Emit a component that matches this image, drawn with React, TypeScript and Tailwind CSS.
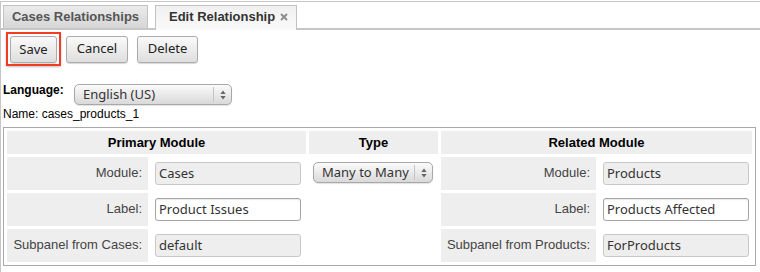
import React from 'react';

const Arrows: React.FC = () => (
  <svg width="6" height="10" viewBox="0 0 6 10">
    <path d="M3 0.5 L5.6 4 L0.4 4 Z" fill="#666" />
    <path d="M3 9.5 L5.6 6 L0.4 6 Z" fill="#666" />
  </svg>
);

interface SelectProps {
  value: string;
  width: string;
}

const Select: React.FC<SelectProps> = ({ value, width }) => (
  <div
    className={`${width} h-[21px] flex items-center rounded-[5px] border border-[#a8a8a8] bg-linear-to-b from-[#fbfbfb] to-[#d9d9d9] shadow-[0_1px_1px_rgba(0,0,0,0.12)] font-['Noto_Sans',sans-serif] text-[13px] text-[#333]`}
  >
    <span className="flex-1 pl-[8px] leading-none">{value}</span>
    <span className="h-[15px] border-l border-[#c4c4c4] w-[18px] flex items-center justify-center">
      <Arrows />
    </span>
  </div>
);

interface FieldProps {
  value: string;
  disabled?: boolean;
}

const Field: React.FC<FieldProps> = ({ value, disabled }) => (
  <div
    className={`w-[146px] h-[23px] flex items-center pl-[3px] rounded-[3px] border font-['Noto_Sans',sans-serif] text-[13px] text-[#333] ${
      disabled ? 'bg-[#eeeeee] border-[#c8c8c8]' : 'bg-white border-[#a4a4a4] shadow-[inset_0_1px_1px_rgba(0,0,0,0.08)]'
    }`}
  >
    {value}
  </div>
);

const Button: React.FC<{ label: string; width: string }> = ({ label, width }) => (
  <button
    className={`${width} h-[27px] rounded-[3px] border border-[#ababab] bg-linear-to-b from-[#fafafa] to-[#dedede] shadow-[0_1px_1px_rgba(0,0,0,0.15)] font-['Noto_Sans',sans-serif] text-[13px] text-[#222]`}
  >
    {label}
  </button>
);

const labelCell = "bg-[#eeeeee] h-[33px] align-top text-right pt-[8px] pr-[6px] text-[13px] text-[#444] leading-[15px]";
const fieldCell = "h-[33px] align-top pt-[5px] pl-[4px]";

export default function App() {
  return (
    <div className="w-[760px] h-[272px] bg-white pt-px font-['Liberation_Sans',Arial,sans-serif]">
      <div className="h-[271px] border-t border-l border-[#c6c6c6]">
        {/* tabs */}
        <div className="flex items-end gap-[7px] pl-[2px] pt-[3px] border-b-2 border-[#c6c6c6]">
          <div className="h-[23px] w-[145px] flex items-center justify-center border border-b-0 border-[#c2c2c2] bg-linear-to-b from-[#ebebeb] to-[#d6d6d6] text-[13px] font-bold text-[#555]">
            Cases Relationships
          </div>
          <div className="-mb-[2px] h-[25px] pb-[2px] w-[142px] flex items-center pl-[13px] border border-b-0 border-[#c2c2c2] bg-linear-to-b from-[#f0f0f0] to-[#fafafa] text-[13px] font-bold text-[#333]">
            Edit Relationship
            <svg className="ml-[5px]" width="8" height="8" viewBox="0 0 8 8">
              <path d="M1 1 L7 7 M7 1 L1 7" stroke="#8a8a8a" strokeWidth="1.8" />
            </svg>
          </div>
        </div>

        {/* buttons */}
        <div className="flex items-center pl-[5px] mt-[2px]">
          <div className="border-2 border-[#f23c24] p-[2px] pb-px shadow-[0_1px_2px_rgba(0,0,0,0.25)] mr-[5px]">
            <Button label="Save" width="w-[47px]" />
          </div>
          <div className="mr-[9px]">
            <Button label="Cancel" width="w-[62px]" />
          </div>
          <Button label="Delete" width="w-[61px]" />
        </div>

        <div className="pl-[2px]">
          {/* language */}
          <div className="flex items-start mt-[16px]">
            <span className="w-[71px] text-[12px] font-bold text-black leading-[14px] pt-px">Language:</span>
            <div className="mt-[2px]">
              <Select value="English (US)" width="w-[158px]" />
            </div>
          </div>
          <div className="text-[12px] text-black leading-[14px] mt-[2px]">Name: cases_products_1</div>

          {/* relationship table */}
          <table className="mt-[6px] w-[753px] table-fixed border-separate border-spacing-[3px] border border-[#a8a8a8]">
            <colgroup>
              <col className="w-[141px]" />
              <col className="w-[155px]" />
              <col className="w-[129px]" />
              <col className="w-[155px]" />
              <col className="w-[153px]" />
            </colgroup>
            <tbody>
              <tr>
                <th colSpan={2} className="bg-[#eeeeee] h-[23px] text-[13px] font-bold text-black">Primary Module</th>
                <th className="bg-[#eeeeee] h-[23px] text-[13px] font-bold text-black">Type</th>
                <th colSpan={2} className="bg-[#eeeeee] h-[23px] text-[13px] font-bold text-black">Related Module</th>
              </tr>
              <tr>
                <td className={labelCell}>Module:</td>
                <td className={fieldCell}><Field value="Cases" disabled /></td>
                <td rowSpan={3} className="align-top pt-[5px] pl-[4px]">
                  <Select value="Many to Many" width="w-[120px]" />
                </td>
                <td className={labelCell}>Module:</td>
                <td className={fieldCell}><Field value="Products" disabled /></td>
              </tr>
              <tr>
                <td className={labelCell}>Label:</td>
                <td className={fieldCell}><Field value="Product Issues" /></td>
                <td className={labelCell}>Label:</td>
                <td className={fieldCell}><Field value="Products Affected" /></td>
              </tr>
              <tr>
                <td className={labelCell}>Subpanel from Cases:</td>
                <td className={fieldCell}><Field value="default" disabled /></td>
                <td className={labelCell}>Subpanel from Products:</td>
                <td className={fieldCell}><Field value="ForProducts" disabled /></td>
              </tr>
            </tbody>
          </table>
        </div>
      </div>
    </div>
  );
}
